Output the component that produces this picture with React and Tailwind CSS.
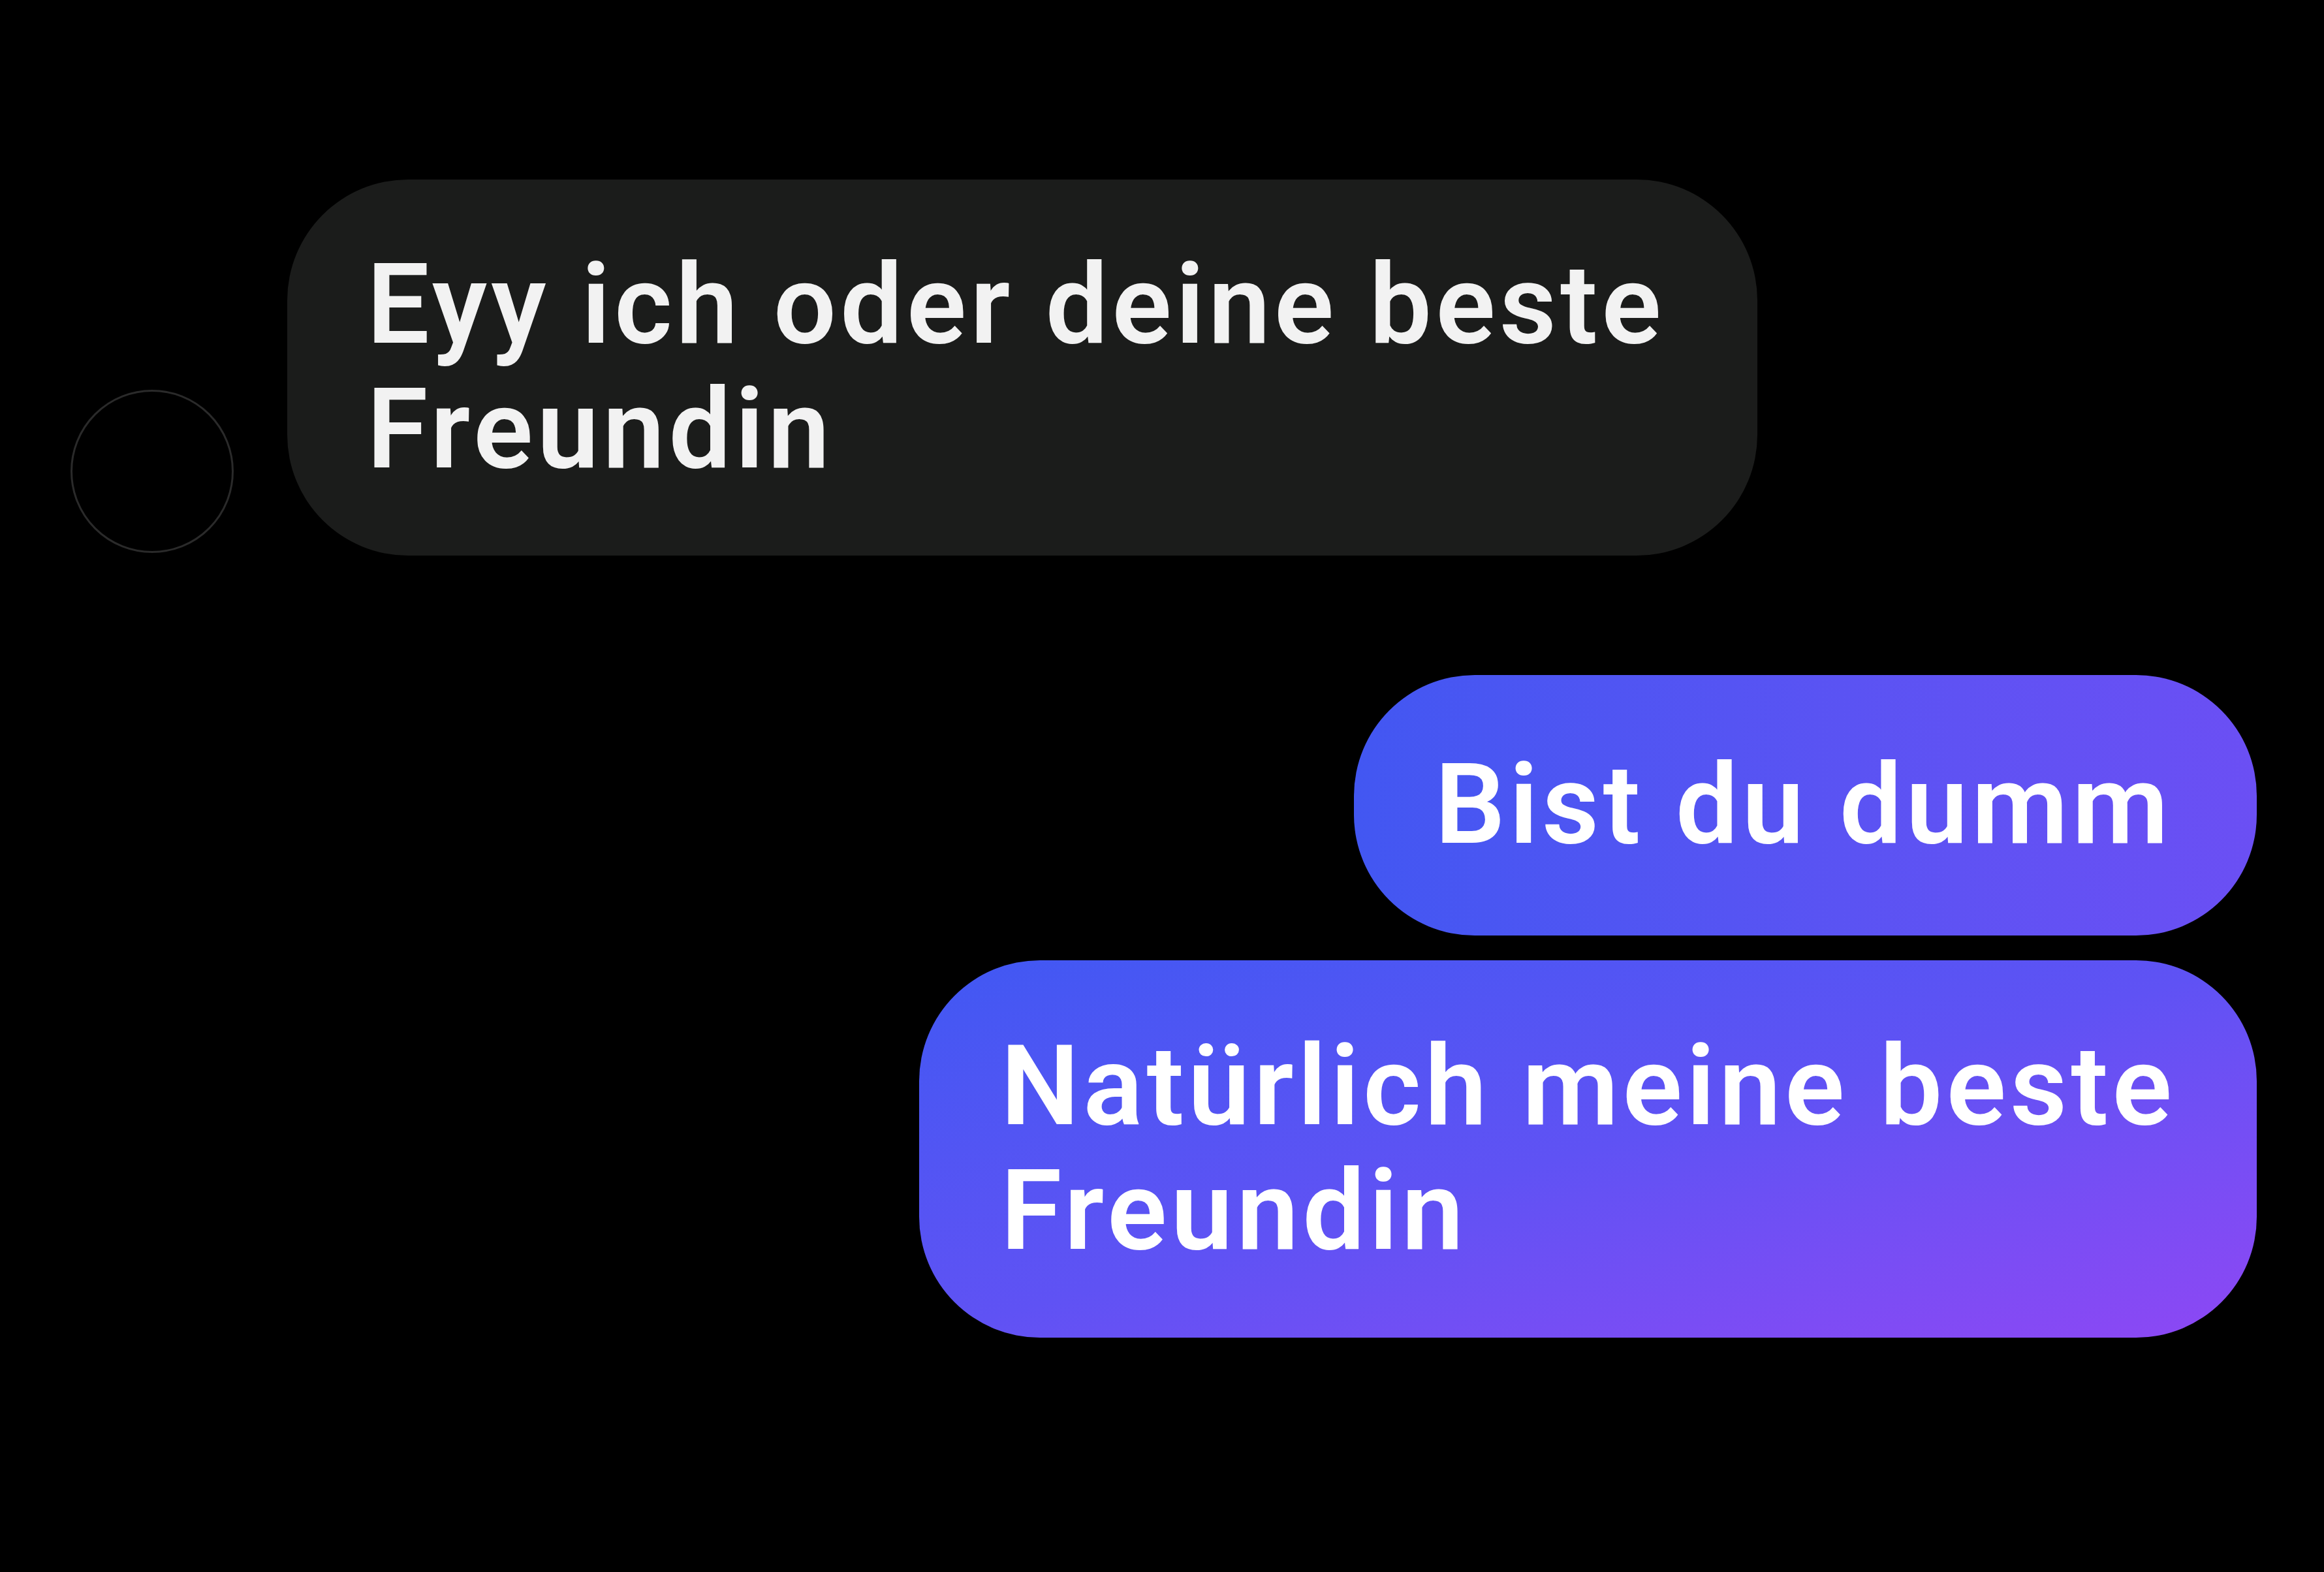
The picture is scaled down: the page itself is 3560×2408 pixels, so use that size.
export default function App() {
  const font = { fontFamily: "Roboto, 'Noto Sans', sans-serif" };

  return (
    <main
      className="w-full h-screen bg-black pl-[108px] pr-[103px] pt-[275px] flex flex-col overflow-hidden"
      style={font}
    >
      {/* incoming message */}
      <div className="flex items-end gap-[82px]">
        <div className="w-[250px] h-[250px] rounded-full border-[3px] border-[#2a2a2a] shrink-0 mb-[4px]" />
        <div className="w-[2252px] bg-[#1b1c1b] rounded-[185px] pl-[122px] pr-[70px] py-[97px]">
          <p className="text-[170px] leading-[191px] font-semibold text-[#f2f2f2] tracking-[6px]">
            Eyy ich oder deine beste Freundin
          </p>
        </div>
      </div>

      {/* outgoing messages */}
      <div className="flex flex-col items-end gap-[38px] mt-[183px]">
        <div className="w-[1383px] rounded-[185px] bg-linear-to-r from-[#4257f2] to-[#6b4ff4] pl-[124px] pr-[70px] py-[104px]">
          <p className="text-[170px] leading-[191px] font-semibold text-white tracking-[6px]">
            Bist du dumm
          </p>
        </div>
        <div className="w-[2049px] rounded-[185px] bg-linear-to-br from-[#4058f3] via-[#5f52f4] to-[#8d47f4] pl-[125px] pr-[70px] py-[98px]">
          <p className="text-[170px] leading-[191px] font-semibold text-white tracking-[6px]">
            Natürlich meine beste Freundin
          </p>
        </div>
      </div>
    </main>
  );
}
